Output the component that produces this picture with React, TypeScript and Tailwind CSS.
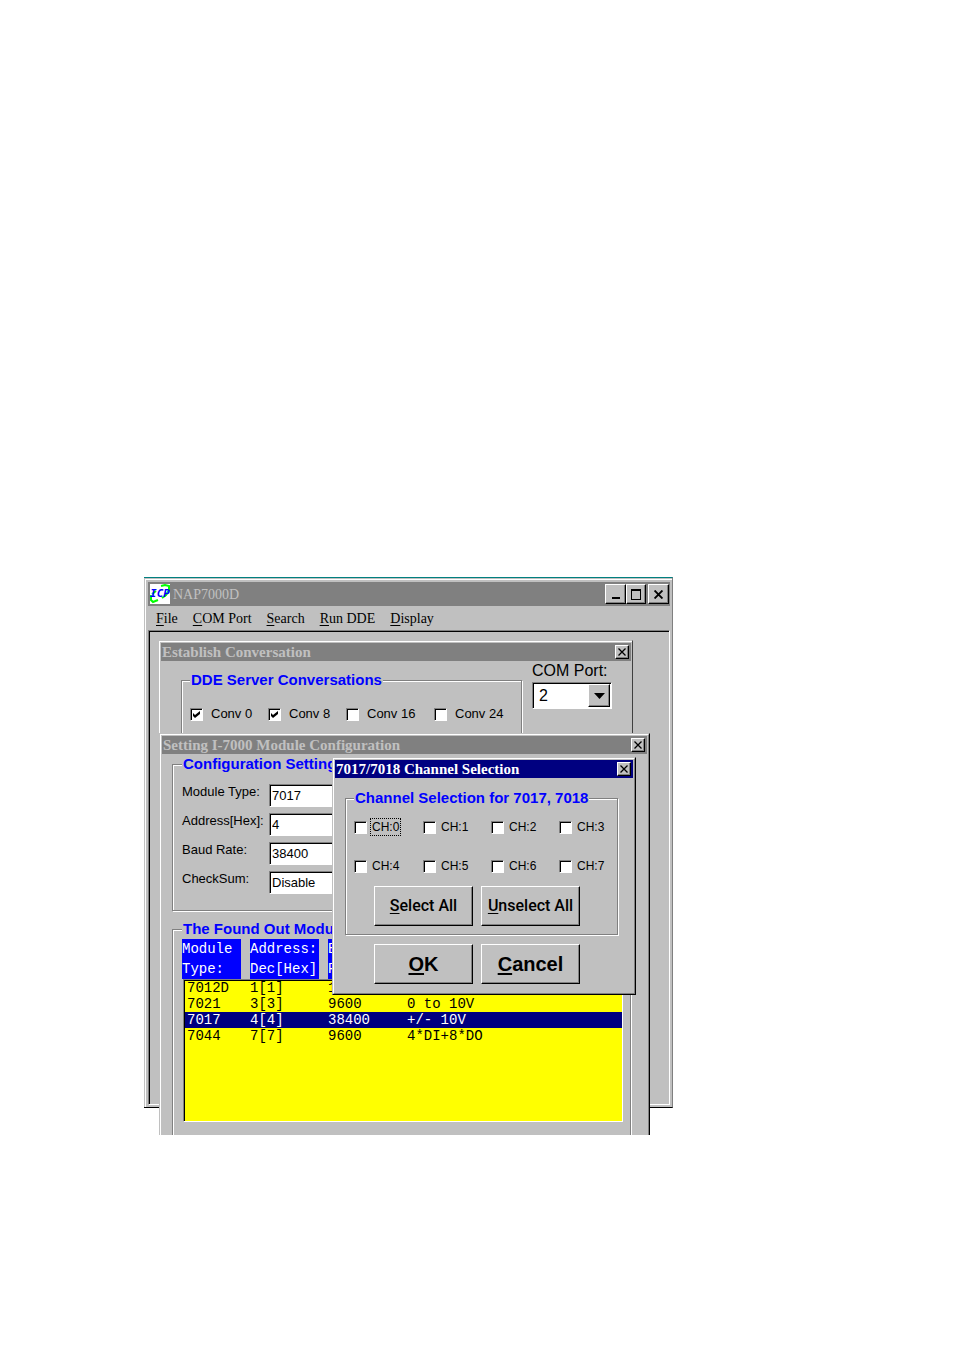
import React, { useState } from 'react';
import clsx from 'clsx';

const RAISED = 'border border-t-white border-l-white border-r-black border-b-black shadow-[inset_-1px_-1px_0_#808080] bg-[#c0c0c0]';
const SUNKEN = 'border border-t-[#808080] border-l-[#808080] border-r-white border-b-white shadow-[inset_1px_1px_0_#000]';

const menus = ['File', 'COM Port', 'Search', 'Run DDE', 'Display'];

const conversations = [
    { name: 'Conv 0', on: true },
    { name: 'Conv 8', on: true },
    { name: 'Conv 16', on: false },
    { name: 'Conv 24', on: false },
];

const settings = [
    { id: 'module-type', label: 'Module Type:', value: '7017' },
    { id: 'address', label: 'Address[Hex]:', value: '4' },
    { id: 'baud-rate', label: 'Baud Rate:', value: '38400' },
    { id: 'checksum', label: 'CheckSum:', value: 'Disable' },
];

const modules = [
    { type: '7012D', address: '1[1]', baud: '19200', range: '' },
    { type: '7021', address: '3[3]', baud: '9600', range: '0 to 10V' },
    { type: '7017', address: '4[4]', baud: '38400', range: '+/- 10V' },
    { type: '7044', address: '7[7]', baud: '9600', range: '4*DI+8*DO' },
];

// first letter underlined, as the keyboard shortcut
const Hot: React.FC<{ text: string }> = ({ text }) => (
    <span>
        <span className="underline underline-offset-2">{text[0]}</span>
        {text.slice(1)}
    </span>
);

const CloseIcon: React.FC<{ size: number; thick?: boolean }> = ({ size, thick }) => (
    <svg width={size} height={size} viewBox="0 0 8 8" stroke="#000" strokeWidth={thick ? 1.7 : 1.3}>
        <path d="M0.5 0.5 L7.5 7.5 M7.5 0.5 L0.5 7.5" />
    </svg>
);

interface CheckProps {
    label: string;
    initial?: boolean;
    focused?: boolean;
    small?: boolean;
}

const Check: React.FC<CheckProps> = ({ label, initial = false, focused, small }) => {
    const [checked, setChecked] = useState(initial);

    return (
        <label className={clsx('flex h-5 items-center whitespace-nowrap', small ? 'gap-[3px] text-[12px]' : 'gap-[6px] text-[13px]')}>
            <span className="relative block h-[13px] w-[13px] shrink-0">
                <input
                    type="checkbox"
                    checked={checked}
                    onChange={() => setChecked(!checked)}
                    className={`block h-[13px] w-[13px] appearance-none bg-white ${SUNKEN}`}
                />
                {checked && (
                    <svg className="pointer-events-none absolute inset-0" width="13" height="13" viewBox="0 0 13 13">
                        <path d="M3 5 L5 7 L10 3 V6 L5 10 L3 8 Z" fill="#000" />
                    </svg>
                )}
            </span>
            <span className={clsx('border px-px leading-4', focused ? 'border-dotted border-black' : 'border-transparent')}>
                {label}
            </span>
        </label>
    );
};

interface TitleProps {
    text: string;
    active?: boolean;
}

const TitleBar: React.FC<TitleProps> = ({ text, active }) => (
    <div
        className={clsx(
            'flex h-[18px] items-center justify-between pl-px pr-[2px] font-["Liberation_Serif",serif] text-[15px] leading-none font-bold',
            active ? 'bg-[#000080] text-white' : 'bg-[#808080] text-[#c0c0c0]'
        )}
    >
        <span className="whitespace-nowrap">{text}</span>
        <button aria-label="Close" className={`flex h-[14px] w-[14px] items-center justify-center ${RAISED}`}>
            <CloseIcon size={8} />
        </button>
    </div>
);

const Group: React.FC<{ title: string; className?: string; children: React.ReactNode }> = ({ title, className, children }) => (
    <fieldset className={clsx('min-w-0 border border-[#808080] shadow-[1px_1px_0_#fff,inset_1px_1px_0_#fff]', className)}>
        <legend className="bg-[#c0c0c0] px-px text-[15px] leading-5 font-bold whitespace-nowrap text-[#0000ff]">
            {title}
        </legend>
        {children}
    </fieldset>
);

const BigButton: React.FC<{ text: string; large?: boolean }> = ({ text, large }) => (
    <button
        className={clsx(
            'h-10 whitespace-nowrap',
            RAISED,
            large ? 'text-[20px] font-bold' : 'font-[Roboto,sans-serif] text-[16px] font-medium'
        )}
    >
        <Hot text={text} />
    </button>
);

const MainWindow = () => (
    <div className="flex h-[531px] flex-col border-t border-r border-b border-t-[#008080] border-r-[#808080] border-b-black bg-[#c0c0c0] pt-px pl-px">
        <div className="flex grow flex-col border-t border-l border-white p-[2px]">
            <div className="flex h-6 items-center justify-between bg-[#808080] pr-px pl-[2px]">
                <div className="flex items-center gap-[3px]">
                    <svg width="20" height="20" viewBox="0 0 20 20">
                        <rect width="20" height="20" fill="#fff" />
                        <path d="M1 11 V16 L3 18 L8 16 M2 10 L6 7 M11 2 L15 1 L19 2 V6 L16 11 L12 14" fill="none" stroke="#00ff00" strokeWidth="2" />
                        <text x="10" y="13" textAnchor="middle" fontFamily="DejaVu Sans Mono, monospace" fontWeight="700" fontStyle="italic" fontSize="11" fill="#0000ff">
                            ICP
                        </text>
                    </svg>
                    <span className='font-["Liberation_Serif",serif] text-[14px] text-[#c0c0c0]'>NAP7000D</span>
                </div>
                <div className="flex">
                    <button aria-label="Minimize" className={`flex h-5 w-[21px] items-end justify-center pb-1 ${RAISED}`}>
                        <span className="h-[2px] w-2 bg-black" />
                    </button>
                    <button aria-label="Maximize" className={`flex h-5 w-5 items-center justify-center ${RAISED}`}>
                        <span className="h-[11px] w-[10px] border border-t-2 border-black" />
                    </button>
                    <button aria-label="Close" className={`ml-[2px] flex h-5 w-[21px] items-center justify-center ${RAISED}`}>
                        <CloseIcon size={9} thick />
                    </button>
                </div>
            </div>
            <nav className='flex h-6 items-center gap-[15px] pl-2 font-["Liberation_Serif",serif] text-[14px]'>
                {menus.map((menu) => (
                    <button key={menu} className="whitespace-nowrap">
                        <Hot text={menu} />
                    </button>
                ))}
            </nav>
            <div className={`grow ${SUNKEN}`} />
        </div>
    </div>
);

const EstablishWindow = () => (
    <div className="absolute top-[63px] left-[15px] h-24 w-[474px] border-t border-r border-t-[#c0c0c0] border-r-[#404040] bg-[#c0c0c0]">
        <div className="h-full border-t border-l border-white pt-px pr-px pl-px">
            <TitleBar text="Establish Conversation" />
            <div className="flex items-start gap-[10px] pt-[9px] pl-5">
                <Group title="DDE Server Conversations" className="h-24 w-[341px] pl-2">
                    <div className="mt-[14px] grid grid-cols-[78px_78px_88px_1fr]">
                        {conversations.map((conv) => (
                            <Check key={conv.name} label={conv.name} initial={conv.on} />
                        ))}
                    </div>
                </Group>
                <div className="w-20">
                    <label htmlFor="com-port" className="-mt-[9px] block pb-px text-[16px] leading-5 whitespace-nowrap">
                        COM Port:
                    </label>
                    <div className="relative">
                        <select id="com-port" defaultValue="2" className={`block h-[27px] w-full appearance-none bg-white pl-[6px] text-[16px] ${SUNKEN}`}>
                            <option>1</option>
                            <option>2</option>
                        </select>
                        <span className={`pointer-events-none absolute top-[2px] right-[2px] flex h-[23px] w-[22px] items-center justify-center ${RAISED}`}>
                            <svg width="11" height="6" viewBox="0 0 11 6">
                                <path d="M0 0 H11 L5.5 6 Z" />
                            </svg>
                        </span>
                    </div>
                </div>
            </div>
        </div>
    </div>
);

const SettingWindow = () => (
    <div className="absolute top-[156px] left-[15px] h-[410px] w-[491px] border border-t-[#c0c0c0] border-r-black border-l-[#c0c0c0] bg-[#c0c0c0]">
        <div className="h-full border border-t-white border-r-[#808080] border-l-white p-px">
            <TitleBar text="Setting I-7000 Module Configuration" />
            <div className="pr-4 pl-[10px]">
                <Group title="Configuration Settings" className="pb-4 pl-[9px]">
                    <div className="flex flex-col gap-[6px] pt-[10px]">
                        {settings.map((item) => (
                            <div key={item.id} className="flex h-[23px] items-start">
                                <label htmlFor={item.id} className="w-[87px] text-[13px] leading-4 whitespace-nowrap">
                                    {item.label}
                                </label>
                                <input id={item.id} defaultValue={item.value} className={`h-[23px] w-40 bg-white pl-[2px] text-[13px] ${SUNKEN}`} />
                            </div>
                        ))}
                    </div>
                </Group>
                <Group title="The Found Out Modules" className="mt-2 h-[240px] pr-[7px] pl-[9px]">
                    <table className='block font-["Liberation_Mono",monospace] text-[14px]'>
                        <thead className="block text-left leading-5 text-white">
                            <tr className="grid grid-cols-[59px_69px_70px_1fr] gap-x-[9px]">
                                <th className="bg-[#0000ff] font-normal">Module Type:</th>
                                <th className="bg-[#0000ff] font-normal">Address: Dec[Hex]</th>
                                <th className="bg-[#0000ff] font-normal">Baud<br />Rate:</th>
                                <th className="bg-[#0000ff]" aria-label="Range" />
                            </tr>
                        </thead>
                        <tbody className={`ml-px block h-[143px] bg-[#ffff00] pl-px ${SUNKEN}`}>
                            {modules.map((mod) => (
                                <tr
                                    key={mod.type}
                                    className={clsx(
                                        'grid h-4 grid-cols-[65px_78px_79px_1fr] items-center leading-4 whitespace-nowrap',
                                        mod.type === '7017' && 'bg-[#000080] text-white'
                                    )}
                                >
                                    <td className="pl-[2px]">{mod.type}</td>
                                    <td>{mod.address}</td>
                                    <td>{mod.baud}</td>
                                    <td>{mod.range}</td>
                                </tr>
                            ))}
                        </tbody>
                    </table>
                </Group>
            </div>
        </div>
    </div>
);

const ChannelDialog = () => (
    <div role="dialog" aria-label="7017/7018 Channel Selection" className="absolute top-[180px] left-[188px] w-[304px] border border-t-[#c0c0c0] border-r-black border-b-black border-l-[#c0c0c0] bg-[#c0c0c0]">
        <div className="border border-t-white border-r-[#808080] border-b-[#808080] border-l-white p-px">
            <TitleBar text="7017/7018 Channel Selection" active />
            <div className="pt-[10px] pr-[15px] pb-2 pl-[10px]">
                <Group title="Channel Selection for 7017, 7018" className="pb-2 pl-2">
                    <div className="grid grid-cols-[69px_68px_68px_1fr] gap-y-[19px] pt-[9px]">
                        {[0, 1, 2, 3, 4, 5, 6, 7].map((ch) => (
                            <Check key={ch} label={`CH:${ch}`} focused={ch === 0} small />
                        ))}
                    </div>
                    <div className="mt-[10px] grid grid-cols-2 gap-2 pr-[37px] pl-5">
                        <BigButton text="Select All" />
                        <BigButton text="Unselect All" />
                    </div>
                </Group>
                <div className="mt-[9px] grid grid-cols-2 gap-2 pr-[38px] pl-[29px]">
                    <BigButton text="OK" large />
                    <BigButton text="Cancel" large />
                </div>
            </div>
        </div>
    </div>
);

export default function App() {
    return (
        <main className='min-h-screen bg-white pt-[577px] pl-36 font-["Liberation_Sans",sans-serif] text-black'>
            <div className="relative h-[558px] w-full max-w-[529px] overflow-hidden">
                <MainWindow />
                <EstablishWindow />
                <SettingWindow />
                <ChannelDialog />
            </div>
        </main>
    );
}
